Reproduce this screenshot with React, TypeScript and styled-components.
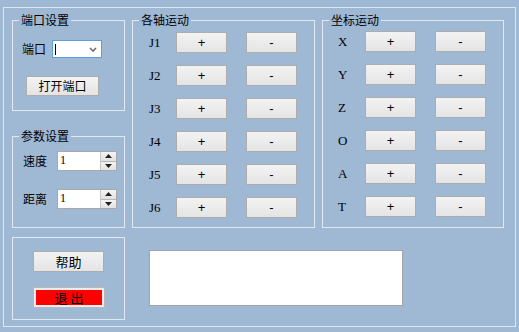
import styled, { createGlobalStyle } from "styled-components";

const GlobalStyle = createGlobalStyle`
  html, body {
    margin: 0;
    padding: 0;
    background: #9fb8d4;
    width: 519px;
    height: 332px;
    overflow: hidden;
    font-family: "Noto Sans CJK SC", "Noto Sans", sans-serif;
  }
`;

const Frame = styled.div`
  box-sizing: border-box;
  margin: 7px 0 0 3px;
  width: 513px;
  height: 320px;
  border: 1px solid #dfe6ef;
  padding: 12px 0 0 8px;
  display: grid;
  grid-template-columns: 113px 183px 182px;
  grid-template-rows: 208px auto;
  column-gap: 7px;
  row-gap: 9px;
`;

const Group = styled.div<{ $h: number; $pt?: number; $pl?: number }>`
  position: relative;
  box-sizing: border-box;
  height: ${(p) => p.$h}px;
  border: 1px solid #e1e8f0;
  padding: ${(p) => p.$pt ?? 0}px 0 0 ${(p) => p.$pl ?? 0}px;
`;

const Title = styled.span`
  position: absolute;
  top: -9px;
  left: 6px;
  padding: 0 2px;
  background: #9fb8d4;
  font-size: 12px;
  line-height: 16px;
  color: #000;
`;

const LeftColumn = styled.div`
  display: flex;
  flex-direction: column;
  justify-content: space-between;
`;

const FieldRow = styled.div<{ $gap: number }>`
  display: flex;
  align-items: center;
  gap: ${(p) => p.$gap}px;
`;

const Label = styled.span`
  font-size: 12px;
  color: #000;
  line-height: 16px;
`;

const Combo = styled.div`
  box-sizing: border-box;
  width: 50px;
  height: 18px;
  background: #fff;
  border: 1px solid #5b9fe0;
  display: flex;
  align-items: center;
  justify-content: space-between;
  padding: 0 4px 0 2px;
`;

const Caret = styled.span`
  width: 1px;
  height: 11px;
  background: #000;
`;

const Button = styled.button<{ $w: number; $h: number }>`
  box-sizing: border-box;
  width: ${(p) => p.$w}px;
  height: ${(p) => p.$h}px;
  margin: 0;
  padding: 0;
  border: 1px solid #adadad;
  border-radius: 0;
  background: linear-gradient(#f3f3f3, #e4e4e4);
  font-family: "Noto Sans CJK SC", "Noto Sans", sans-serif;
  font-size: 12px;
  line-height: 1;
  color: #000;
  display: flex;
  align-items: center;
  justify-content: center;
`;

const OpenButton = styled(Button)`
  margin: 18px 0 0 4px;
`;

const ExitButton = styled(Button)`
  background: #ff0000;
  border: 1px solid #b8b8b8;
  box-shadow: inset 0 0 0 2px #ececec;
  font-size: 13px;
`;

const HelpButton = styled(Button)`
  font-size: 13px;
`;

const Spin = styled.div`
  box-sizing: border-box;
  width: 60px;
  height: 20px;
  background: #fff;
  border: 1px solid #a8a8a8;
  display: flex;
  justify-content: space-between;
`;

const SpinValue = styled.span`
  font-family: "Liberation Serif", serif;
  font-size: 12px;
  line-height: 16px;
  padding-left: 2px;
`;

const SpinButtons = styled.div`
  width: 15px;
  display: flex;
  flex-direction: column;
  border-left: 1px solid #c8c8c8;
`;

const SpinHalf = styled.div`
  flex: 1;
  display: flex;
  align-items: center;
  justify-content: center;
  background: linear-gradient(#f4f4f4, #e2e2e2);
  & + & {
    border-top: 1px solid #b8b8b8;
  }
`;

const Stack = styled.div<{ $gap: number }>`
  display: flex;
  flex-direction: column;
  gap: ${(p) => p.$gap}px;
`;

const AxisRow = styled.div`
  display: flex;
  align-items: center;
  height: 21px;
`;

const AxisLabel = styled.span`
  width: 27px;
  font-family: "Liberation Serif", serif;
  font-size: 13px;
  color: #000;
`;

const MinusButton = styled(Button)`
  margin-left: 19px;
`;

const Sign = styled.span`
  font-family: "Liberation Sans", sans-serif;
  font-size: 13px;
`;

const Output = styled.div`
  grid-column: 2 / 4;
  box-sizing: border-box;
  margin: 13px 0 0 17px;
  width: 254px;
  height: 56px;
  background: #fff;
  border: 1px solid #a4a4a4;
`;

const Arrow = ({ up }: { up?: boolean }) => (
  <svg width="7" height="4" viewBox="0 0 7 4">
    <path d={up ? "M0 4 L3.5 0 L7 4 Z" : "M0 0 L3.5 4 L7 0 Z"} fill="#222" />
  </svg>
);

const SpinBox = ({ value }: { value: string }) => (
  <Spin>
    <SpinValue>{value}</SpinValue>
    <SpinButtons>
      <SpinHalf>
        <Arrow up />
      </SpinHalf>
      <SpinHalf>
        <Arrow />
      </SpinHalf>
    </SpinButtons>
  </Spin>
);

const AxisGroup = ({ title, labels, pt, pl }: { title: string; labels: string[]; pt: number; pl: number }) => (
  <Group $h={208} $pt={pt} $pl={pl}>
    <Title>{title}</Title>
    <Stack $gap={12}>
      {labels.map((l) => (
        <AxisRow key={l}>
          <AxisLabel>{l}</AxisLabel>
          <Button $w={51} $h={21}>
            <Sign>+</Sign>
          </Button>
          <MinusButton $w={51} $h={21}>
            <Sign>-</Sign>
          </MinusButton>
        </AxisRow>
      ))}
    </Stack>
  </Group>
);

export default function App() {
  return (
    <>
      <GlobalStyle />
      <Frame>
        <LeftColumn>
          <Group $h={91} $pt={19} $pl={9}>
            <Title>端口设置</Title>
            <FieldRow $gap={6}>
              <Label>端口</Label>
              <Combo>
                <Caret />
                <svg width="8" height="5" viewBox="0 0 8 5">
                  <path d="M1 1 L4 4 L7 1" stroke="#6a6a6a" strokeWidth="1.6" fill="none" />
                </svg>
              </Combo>
            </FieldRow>
            <OpenButton $w={73} $h={20}>打开端口</OpenButton>
          </Group>
          <Group $h={92} $pt={14} $pl={10}>
            <Title>参数设置</Title>
            <Stack $gap={18}>
              <FieldRow $gap={10}>
                <Label>速度</Label>
                <SpinBox value="1" />
              </FieldRow>
              <FieldRow $gap={10}>
                <Label>距离</Label>
                <SpinBox value="1" />
              </FieldRow>
            </Stack>
          </Group>
        </LeftColumn>
        <AxisGroup title="各轴运动" labels={["J1", "J2", "J3", "J4", "J5", "J6"]} pt={11} pl={16} />
        <AxisGroup title="坐标运动" labels={["X", "Y", "Z", "O", "A", "T"]} pt={10} pl={15} />
        <Group $h={83} $pt={13} $pl={20}>
          <Stack $gap={15}>
            <HelpButton $w={71} $h={21}>帮助</HelpButton>
            <ExitButton $w={72} $h={21}>退 出</ExitButton>
          </Stack>
        </Group>
        <Output />
      </Frame>
    </>
  );
}
